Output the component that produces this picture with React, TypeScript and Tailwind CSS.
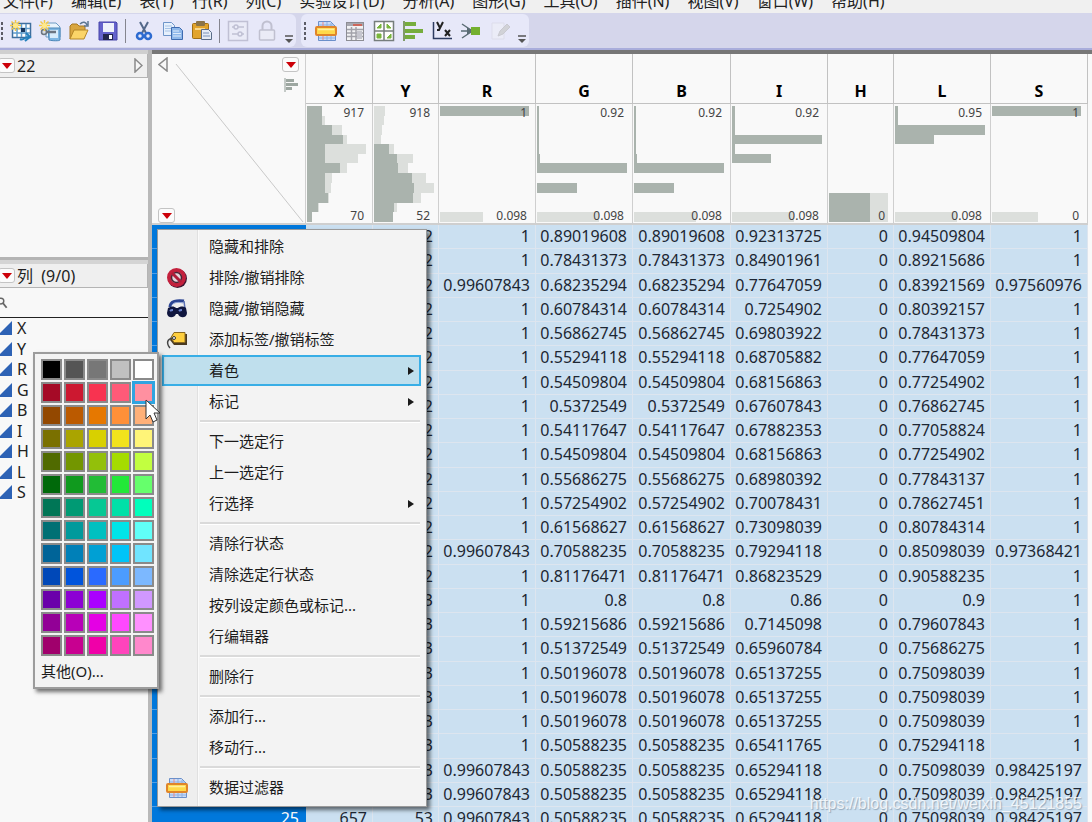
import React from 'react';
import { clsx } from 'clsx';

const MENUS = [
  '文件(F)', '编辑(E)', '表(T)', '行(R)', '列(C)', '实验设计(D)', '分析(A)',
  '图形(G)', '工具(O)', '插件(N)', '视图(V)', '窗口(W)', '帮助(H)',
];

// each bin is [selected, total] in pixels, listed top to bottom
type Bin = [number, number];

interface Column {
  name: string;
  width: number;
  max: string;
  min: string;
  bins: Bin[];
}

const E: Bin = [0, 0];
const GB_BINS: Bin[] = [[2, 2], [2, 2], [2, 2], [2, 2], [2, 2], [3, 3], [90, 90], E, [40, 40], E, E, [0, 62]];

const COLUMNS: Column[] = [
  {
    name: 'X', width: 67, max: '917', min: '70',
    bins: [[15, 15], [15, 18], [25, 35], [36, 40], [18, 59], [18, 51], [33, 40], [18, 25], [18, 24], [21, 22], [11, 12], [5, 5]],
  },
  {
    name: 'Y', width: 66, max: '918', min: '52',
    bins: [[0, 11], [0, 10], [0, 8], [0, 7], [15, 20], [23, 39], [24, 34], [38, 52], [40, 60], [39, 47], [20, 23], [19, 19]],
  },
  { name: 'R', width: 97, max: '1', min: '0.098', bins: [[89, 89], E, E, E, E, E, E, E, E, E, E, [0, 43]] },
  { name: 'G', width: 97, max: '0.92', min: '0.098', bins: GB_BINS },
  { name: 'B', width: 98, max: '0.92', min: '0.098', bins: GB_BINS },
  {
    name: 'I', width: 97, max: '0.92', min: '0.098',
    bins: [[3, 3], [3, 3], [3, 3], [90, 90], [3, 3], [39, 39], E, E, E, E, E, [0, 62]],
  },
  { name: 'H', width: 66, max: '', min: '0', bins: [E, E, E, E, E, E, E, E, E, [41, 59], [41, 59], [41, 59]] },
  {
    name: 'L', width: 97, max: '0.95', min: '0.098',
    bins: [[3, 3], [3, 3], [90, 90], [39, 39], E, E, E, E, E, E, E, [0, 62]],
  },
  { name: 'S', width: 97, max: '1', min: '0', bins: [[89, 89], E, E, E, E, E, E, E, E, E, E, [0, 46]] },
];

// row label first, then one value per column
const ROWS: string[][] = [
  ['', '', '52', '1', '0.89019608', '0.89019608', '0.92313725', '0', '0.94509804', '1'],
  ['', '', '52', '1', '0.78431373', '0.78431373', '0.84901961', '0', '0.89215686', '1'],
  ['', '', '52', '0.99607843', '0.68235294', '0.68235294', '0.77647059', '0', '0.83921569', '0.97560976'],
  ['', '', '52', '1', '0.60784314', '0.60784314', '0.7254902', '0', '0.80392157', '1'],
  ['', '', '52', '1', '0.56862745', '0.56862745', '0.69803922', '0', '0.78431373', '1'],
  ['', '', '52', '1', '0.55294118', '0.55294118', '0.68705882', '0', '0.77647059', '1'],
  ['', '', '52', '1', '0.54509804', '0.54509804', '0.68156863', '0', '0.77254902', '1'],
  ['', '', '52', '1', '0.5372549', '0.5372549', '0.67607843', '0', '0.76862745', '1'],
  ['', '', '52', '1', '0.54117647', '0.54117647', '0.67882353', '0', '0.77058824', '1'],
  ['', '', '52', '1', '0.54509804', '0.54509804', '0.68156863', '0', '0.77254902', '1'],
  ['', '', '52', '1', '0.55686275', '0.55686275', '0.68980392', '0', '0.77843137', '1'],
  ['', '', '52', '1', '0.57254902', '0.57254902', '0.70078431', '0', '0.78627451', '1'],
  ['', '', '52', '1', '0.61568627', '0.61568627', '0.73098039', '0', '0.80784314', '1'],
  ['', '', '52', '0.99607843', '0.70588235', '0.70588235', '0.79294118', '0', '0.85098039', '0.97368421'],
  ['', '', '52', '1', '0.81176471', '0.81176471', '0.86823529', '0', '0.90588235', '1'],
  ['', '', '53', '1', '0.8', '0.8', '0.86', '0', '0.9', '1'],
  ['', '', '53', '1', '0.59215686', '0.59215686', '0.7145098', '0', '0.79607843', '1'],
  ['', '', '53', '1', '0.51372549', '0.51372549', '0.65960784', '0', '0.75686275', '1'],
  ['', '', '53', '1', '0.50196078', '0.50196078', '0.65137255', '0', '0.75098039', '1'],
  ['', '', '53', '1', '0.50196078', '0.50196078', '0.65137255', '0', '0.75098039', '1'],
  ['', '', '53', '1', '0.50196078', '0.50196078', '0.65137255', '0', '0.75098039', '1'],
  ['', '', '53', '1', '0.50588235', '0.50588235', '0.65411765', '0', '0.75294118', '1'],
  ['', '', '53', '0.99607843', '0.50588235', '0.50588235', '0.65294118', '0', '0.75098039', '0.98425197'],
  ['', '', '53', '0.99607843', '0.50588235', '0.50588235', '0.65294118', '0', '0.75098039', '0.98425197'],
  ['25', '657', '53', '0.99607843', '0.50588235', '0.50588235', '0.65294118', '0', '0.75098039', '0.98425197'],
];

const SWATCHES = [
  '#000000', '#555555', '#777777', '#c0c0c0', '#ffffff',
  '#a50a26', '#cc1830', '#f83350', '#ff5a78', '#ff90a0',
  '#934800', '#bb5a00', '#e67800', '#ff9038', '#ffb078',
  '#7a7000', '#aaa400', '#d8d000', '#f2e31c', '#fff478',
  '#506a00', '#739600', '#93c00a', '#a5dc00', '#c2ff40',
  '#00690a', '#109a1e', '#22bc36', '#22e838', '#66ff6c',
  '#007656', '#009a74', '#06c894', '#00e0a8', '#00ffbc',
  '#007074', '#009a9c', '#00c0c0', '#00e4e8', '#60fff8',
  '#006498', '#0080b8', '#00a0d4', '#00c4f8', '#70e4ff',
  '#0048b8', '#0054dc', '#2a6aff', '#4c9cff', '#7cb8ff',
  '#6a00aa', '#8c00d4', '#aa00ff', '#c070ff', '#d098ff',
  '#920096', '#b800b8', '#e400e4', '#ff48ff', '#ff90ff',
  '#a0006c', '#c80090', '#f000a8', '#ff44bc', '#ff88cc',
];
const HOVERED_SWATCH = 9;

/* ---------- icons ---------- */

function Icon({ children, faded }: { children: React.ReactNode; faded?: boolean }) {
  return (
    <svg width="22" height="22" viewBox="0 0 22 22" className={clsx('block shrink-0', faded && 'opacity-50')} aria-hidden="true">
      {children}
    </svg>
  );
}

const Spark = () => (
  <g>
    <path d="M5.500 0v11M0 5.500h11M1.500 1.500l8 8M9.500 1.500l-8 8" stroke="#f3c94a" strokeWidth="1.500" />
    <circle cx="5.500" cy="5.500" r="2.500" fill="#ffe98a" />
  </g>
);

const NewTableIcon = () => (
  <Icon>
    <rect x="2.500" y="3.500" width="18" height="14" fill="#fff" stroke="#3f6f9e" strokeWidth="1.500" />
    <path d="M3 8.500h17M3 13h17M7 4v13M11.500 4v13M16 4v13" stroke="#5f9ccb" strokeWidth="1.500" />
    <rect x="11" y="8" width="4" height="4" fill="#17375e" />
    <path d="M10 19c4 2 5-3 9-2M16 13l4 4-5 4" stroke="#2581bd" strokeWidth="2" fill="none" />
    <Spark />
  </Icon>
);

const NewScriptIcon = () => (
  <Icon>
    <path d="M7 3h10l4 4v10H7z" fill="#e8f3fc" stroke="#6e9cc4" />
    <path d="M9 8h12v12c0 1-8 1-11 0z" fill="#7fb7e2" stroke="#4a86b8" />
    <path d="M11 10h8v8h-8z" fill="#d7ecfa" />
    <path d="M5 12h12" stroke="#6b7580" strokeWidth="2.500" />
    <circle cx="5" cy="12" r="2.500" fill="#d8dde2" stroke="#6b7580" strokeWidth="1.500" />
    <Spark />
  </Icon>
);

const OpenIcon = () => (
  <Icon>
    <path d="M2 19V6l2-2h5l2 2h6v4" fill="#d9a640" stroke="#a87820" />
    <path d="M2 19l4-9h14l-4 9z" fill="#fbd468" stroke="#b58626" />
    <path d="M12 4c3-3 6-2 7 1M20 1v5h-4" fill="none" stroke="#5d7691" strokeWidth="1.500" />
  </Icon>
);

const SaveIcon = () => (
  <Icon>
    <path d="M2 2h17l1 1v17H2z" fill="#6462cc" stroke="#4644a8" />
    <rect x="6" y="3" width="11" height="9" fill="#eef1fb" />
    <rect x="6" y="14" width="10" height="6" fill="#23264e" />
    <rect x="12" y="15" width="3" height="4" fill="#fff" />
  </Icon>
);

const CutIcon = () => (
  <Icon>
    <path d="M7 2l6 11M15 2L9 13" stroke="#54698a" strokeWidth="2" />
    <circle cx="7" cy="16" r="3" fill="none" stroke="#2d6bd0" strokeWidth="2.500" />
    <circle cx="15" cy="16" r="3" fill="none" stroke="#2d6bd0" strokeWidth="2.500" />
  </Icon>
);

const CopyIcon = () => (
  <Icon>
    <path d="M1.500 2.500h8l3 3v10h-11z" fill="#e6f0fc" stroke="#6f95c9" />
    <path d="M3 6h7M3 8.500h7M3 11h7" stroke="#a6c2e6" />
    <path d="M9.500 7.500h8l3 3v9h-11z" fill="#8fb8ea" stroke="#3e6bb0" />
    <path d="M11 11h6M11 13.500h8M11 16h8" stroke="#dceafb" />
  </Icon>
);

const PasteIcon = () => (
  <Icon>
    <rect x="1.500" y="3.500" width="16" height="15" rx="1" fill="#e2a42c" stroke="#a06f15" />
    <rect x="5" y="1" width="9" height="5" rx="1" fill="#8b7448" />
    <path d="M4 8h10v2H4z" fill="#fbd98c" />
    <path d="M10.500 9.500h7l3 3v7h-10z" fill="#e4ebf5" stroke="#5a6c88" />
    <path d="M12 13h6M12 16h7" stroke="#7c93b8" />
  </Icon>
);

const SlidersIcon = () => (
  <Icon faded>
    <rect x="1.500" y="1.500" width="19" height="19" fill="#eeeef6" stroke="#9a9ab0" strokeWidth="1.500" />
    <path d="M5 7h12M5 14h12" stroke="#9a9ab0" strokeWidth="1.500" />
    <circle cx="9" cy="7" r="2" fill="#eeeef6" stroke="#9a9ab0" strokeWidth="1.500" />
    <circle cx="13" cy="14" r="2" fill="#eeeef6" stroke="#9a9ab0" strokeWidth="1.500" />
  </Icon>
);

const LockIcon = () => (
  <Icon faded>
    <path d="M6.500 10V6a4.500 4.500 0 0 1 9 0v4" fill="none" stroke="#9a9aa8" strokeWidth="2" />
    <rect x="3.500" y="10" width="15" height="10" rx="1" fill="#eeeef4" stroke="#9a9aa8" strokeWidth="1.500" />
  </Icon>
);

const FilterIcon = () => (
  <Icon>
    <path d="M3.500 1.500h12l5 5v14h-17z" fill="#c9dcf8" stroke="#6b8fc9" />
    <path d="M12 2v18M16 3v17M4 5h15M4 18h16" stroke="#8fb0e2" />
    <path d="M8 2v18" stroke="#e78b8b" />
    <rect x="1" y="7" width="20" height="8" rx="1" fill="#ffd94a" stroke="#e0852a" strokeWidth="2" />
    <path d="M3 9.500h16" stroke="#fff0a0" strokeWidth="1.500" />
  </Icon>
);

const SummaryIcon = () => (
  <Icon>
    <rect x="2.500" y="2.500" width="17" height="18" fill="#f2f2f4" stroke="#8d8d94" />
    <rect x="3" y="3" width="16" height="3" fill="#a8a8b0" />
    <path d="M9 5h9" stroke="#d8503f" strokeWidth="1.500" />
    <path d="M3 9.500h16M3 13h16M3 16.500h16M7.500 7v13M12 7v13" stroke="#a2a2aa" strokeWidth="1.500" />
    <rect x="13" y="11" width="5" height="8" fill="#c5c5ce" />
  </Icon>
);

const TabulateIcon = () => (
  <Icon>
    <rect x="1.500" y="1.500" width="19" height="19" fill="#fdfdfd" stroke="#767d7c" strokeWidth="1.500" />
    <path d="M11 2v18M2 11h18" stroke="#767d7c" strokeWidth="1.500" />
    <path d="M4 8l4-4v4zM14 4v4h4zM4 14h4v4H4zM14 18l4-4v4z" fill="#79b63c" stroke="#79b63c" />
  </Icon>
);

const DistributionIcon = () => (
  <Icon>
    <path d="M2 1v20" stroke="#5f8238" strokeWidth="1.500" />
    <path d="M3 2h11v4H3zM3 9h18v4H3zM3 15h10v4H3z" fill="#76ad3d" />
  </Icon>
);

const FitIcon = () => (
  <Icon>
    <path d="M2.500 2v16.500H21" fill="none" stroke="#2d3b60" strokeWidth="1.500" />
    <path d="M6 2l3 6M12 2L8 10H6" fill="none" stroke="#222" strokeWidth="2" />
    <path d="M14 10l5 6M19 10l-5 6" stroke="#222" strokeWidth="2" />
  </Icon>
);

const ModelIcon = () => (
  <Icon>
    <path d="M2 4l9 6M1 11h9M2 18l9-6" stroke="#5a6b74" strokeWidth="1.500" />
    <path d="M7 7l5 4-5 4" fill="#5a6b74" />
    <rect x="11" y="7" width="9" height="8" fill="#74b02f" />
  </Icon>
);

const EditIcon = () => (
  <Icon faded>
    <path d="M3 3h12v16H3z" fill="#f0f0f6" stroke="#d5d5de" />
    <path d="M9 16l2-5 7-7 3 3-7 7z" fill="#bdbdb6" stroke="#acaca8" />
  </Icon>
);

const ForbidIcon = () => (
  <Icon>
    <circle cx="11.500" cy="11.500" r="9.500" fill="#3d1530" />
    <circle cx="10.500" cy="10.500" r="7.500" fill="#e3d5dc" stroke="#c3203c" strokeWidth="4" />
    <circle cx="10.500" cy="10.500" r="5" fill="none" stroke="#4a2334" strokeWidth="1.500" />
    <path d="M6 6l9 9" stroke="#b01c38" strokeWidth="3" />
  </Icon>
);

const MaskIcon = () => (
  <Icon>
    <path d="M4 9c0-6 7-7 14-6" fill="none" stroke="#2b4492" strokeWidth="3" />
    <path d="M6 7c2-3 7-3 11-2" fill="none" stroke="#8fa4d8" />
    <path d="M18 3l1 8" stroke="#5a70b4" strokeWidth="1.500" />
    <path d="M2 10c3-2 6-2 8 0h2c2-2 6-2 8 0l1 5c0 5-7 6-9 1h-2c-2 5-9 4-9-1z" fill="#10163f" />
    <path d="M4 13c1-1 2-1 3-1M13 13c1-1 2-1 3-1" stroke="#6f86cf" strokeWidth="2" />
  </Icon>
);

const TagIcon = () => (
  <Icon>
    <path d="M7 5h14v11H8l-4-5z" fill="#4a3a20" />
    <path d="M8 3.500h11v10H8l-3-5z" fill="#ffcf3e" stroke="#8b6a20" />
    <circle cx="8" cy="9" r="1.500" fill="#fff" stroke="#333" />
    <path d="M7 9c-6 1-7 5-3 10" fill="none" stroke="#444" strokeWidth="1.500" />
  </Icon>
);

function RedTriangle() {
  return (
    <button className="flex h-[15px] w-[17px] shrink-0 items-center justify-center rounded-[3px] border border-[#c4c4c4] bg-[#fbfbfb]" aria-label="menu">
      <svg width="10" height="6" viewBox="0 0 10 6"><path d="M0 0h10L5 6z" fill="#cc0008" /></svg>
    </button>
  );
}

/* ---------- toolbar ---------- */

function Grip() {
  return (
    <svg width="10" height="20" viewBox="0 0 10 20" className="shrink-0">
      <path d="M4 1v3M4 6v3M4 11v3M4 16v3" stroke="#5c5c66" strokeWidth="2" />
    </svg>
  );
}

function Tools({ children }: { children: React.ReactNode }) {
  return (
    <>
      {React.Children.map(children, (icon) => (
        <button className="flex w-[29px] shrink-0 items-center justify-center">{icon}</button>
      ))}
    </>
  );
}

const Divider = () => <div className="mx-[3px] h-6 w-px shrink-0 bg-[#85858f]" />;

function Overflow() {
  return (
    <button className="flex h-full w-[15px] shrink-0 items-end justify-center pb-1" aria-label="more">
      <svg width="8" height="8" viewBox="0 0 8 8"><path d="M0 1h8" stroke="#555" strokeWidth="1.500" /><path d="M0 4h8L4 8z" fill="#555" /></svg>
    </button>
  );
}

function Toolbar() {
  return (
    <div className="flex h-[37px] shrink-0 gap-[5px] border-b-2 border-[#a9addb] bg-[#d5d6eb] py-px">
      <div className="flex items-center rounded-r-md bg-[#e7e8f9]">
        <div className="flex w-[6px] justify-center overflow-hidden"><Grip /></div>
        <Tools><NewTableIcon /><NewScriptIcon /><OpenIcon /><SaveIcon /></Tools>
        <Divider />
        <Tools><CutIcon /><CopyIcon /><PasteIcon /></Tools>
        <Divider />
        <Tools><SlidersIcon /><LockIcon /></Tools>
        <Overflow />
      </div>
      <div className="flex items-center rounded-md bg-[#e7e8f9]">
        <Grip />
        <Tools>
          <FilterIcon /><SummaryIcon /><TabulateIcon /><DistributionIcon /><FitIcon /><ModelIcon /><EditIcon />
        </Tools>
        <Overflow />
      </div>
    </div>
  );
}

/* ---------- side panel ---------- */

function PanelHeader({ children }: { children: React.ReactNode }) {
  return (
    <div className="flex h-6 items-center border-b border-r border-[#b4b4b4] bg-[#efefef] pr-1">
      <div className="mr-0.5 flex w-[15px] justify-end overflow-hidden"><RedTriangle /></div>
      {children}
    </div>
  );
}

function SidePanel() {
  return (
    <aside className="flex w-[152px] shrink-0 flex-col border-r-4 border-[#b9b9b9] bg-[#f8f8f8]">
      <section className="h-[210px] border-b-[3px] border-[#b4b4b4]">
        <div className="h-1 bg-[#cfcfcf]" />
        <PanelHeader>
          <h2 className="grow">22</h2>
          <svg width="9" height="15" viewBox="0 0 9 15"><path d="M1 1v13l7-6.500z" fill="#f6f6f6" stroke="#8a8a8a" strokeWidth="1.500" /></svg>
        </PanelHeader>
      </section>
      <section>
        <div className="h-1 bg-[#d4d4d4]" />
        <PanelHeader>
          <h2 className="whitespace-pre">列  (9/0)</h2>
        </PanelHeader>
        <label className="flex h-[30px] items-center border-b border-[#222]">
          <svg width="8" height="12" viewBox="0 0 8 12"><circle cx="1" cy="4" r="3" fill="none" stroke="#666" strokeWidth="1.500" /><path d="M3 6l4 5" stroke="#666" strokeWidth="2" /></svg>
          <input className="w-full min-w-0 bg-transparent outline-none" aria-label="search" />
        </label>
        <ul>
          {COLUMNS.map((c) => (
            <li key={c.name} className="flex h-5 items-center gap-[5px] even:h-[21px]">
              <svg width="12" height="14" viewBox="0 0 12 14"><path d="M12 0v14H-2z" fill="#2d62b5" /></svg>
              <span className="leading-5">{c.name}</span>
            </li>
          ))}
        </ul>
      </section>
    </aside>
  );
}

/* ---------- data grid ---------- */

const BIN_EDGES = [0, 10, 19, 29, 38, 48, 57, 67, 77, 87, 97, 106, 116];

function Histogram({ column }: { column: Column }) {
  return (
    <div className="relative flex h-[119px] flex-col justify-between pr-2 pt-0.5 text-right text-xs font-normal leading-[14px] text-[#444]">
      <svg className="absolute left-0 top-0.5 h-[117px] w-full" aria-hidden="true">
        {column.bins.map(([selected, total], i) => {
          const h = BIN_EDGES[i + 1] - BIN_EDGES[i];
          return (
            <g key={i}>
              <rect x="1" y={BIN_EDGES[i]} width={total} height={h} fill="#dcdfdc" />
              <rect x="1" y={BIN_EDGES[i]} width={selected} height={h} fill="#aab3ad" />
            </g>
          );
        })}
      </svg>
      <span className="relative">{column.max}</span>
      <span className="relative">{column.min}</span>
    </div>
  );
}

function Corner() {
  return (
    <div className="relative flex h-[169px] flex-col justify-between px-1.5 pt-[3px]">
      <svg className="absolute inset-0 h-full w-full" aria-hidden="true">
        <path d="M24 10L151 168" stroke="#c9c9c9" />
      </svg>
      <div className="relative flex items-start justify-between">
        <svg width="10" height="15" viewBox="0 0 10 15"><path d="M9 1v13L1 7.500z" fill="#f6f6f6" stroke="#8a8a8a" strokeWidth="1.500" /></svg>
        <div className="flex flex-col items-center gap-1.5">
          <RedTriangle />
          <svg width="14" height="14" viewBox="0 0 14 14"><path d="M1 0v14" stroke="#8f9a94" /><path d="M2 2.500h8M2 6.500h12M2 10.500h6" stroke="#9da7a1" strokeWidth="3" /></svg>
        </div>
      </div>
      <div className="relative"><RedTriangle /></div>
    </div>
  );
}

function DataGrid() {
  return (
    <div className="min-w-0 grow overflow-hidden border-t-4 border-[#777] bg-[#f9f9f9]">
      <table className="w-[936px] table-fixed border-separate border-spacing-0">
        <colgroup>
          <col className="w-[154px]" />
          {COLUMNS.map((c) => <col key={c.name} style={{ width: c.width }} />)}
        </colgroup>
        <thead>
          <tr>
            <th rowSpan={2} className="border-b-2 border-r border-[#cfcfcf] p-0 align-top"><Corner /></th>
            {COLUMNS.map((c) => (
              <th key={c.name} className="h-[50px] border-b border-r border-[#c2c2c2] p-0 align-bottom font-bold leading-[23px] text-black">
                {c.name}
              </th>
            ))}
          </tr>
          <tr>
            {COLUMNS.map((c) => (
              <td key={c.name} className="border-b-2 border-r border-[#cfcfcf] p-0"><Histogram column={c} /></td>
            ))}
          </tr>
        </thead>
        <tbody>
          {ROWS.map(([label, ...values], r) => (
            <tr key={r} className="h-6 nth-[4n+2]:h-[25px]">
              <th className="border-b border-[#4f9fe6] bg-[#0078dc] p-0 pb-0.5 pr-[7px] text-right font-normal leading-5 text-white">{label}</th>
              {values.map((value, i) => (
                <td key={i} className="border-b border-r border-[#dde5ef] bg-[#cbe0f1] p-0 pb-0.5 pr-[5px] text-right leading-5 text-[#1d2733]">
                  {value}
                </td>
              ))}
            </tr>
          ))}
        </tbody>
      </table>
    </div>
  );
}

/* ---------- context menu ---------- */

interface MenuItem {
  label: string;
  icon?: React.ReactNode;
  submenu?: boolean;
  active?: boolean;
}

const MENU_GROUPS: MenuItem[][] = [
  [
    { label: '隐藏和排除' },
    { label: '排除/撤销排除', icon: <ForbidIcon /> },
    { label: '隐藏/撤销隐藏', icon: <MaskIcon /> },
    { label: '添加标签/撤销标签', icon: <TagIcon /> },
    { label: '着色', submenu: true, active: true },
    { label: '标记', submenu: true },
  ],
  [{ label: '下一选定行' }, { label: '上一选定行' }, { label: '行选择', submenu: true }],
  [{ label: '清除行状态' }, { label: '清除选定行状态' }, { label: '按列设定颜色或标记...' }, { label: '行编辑器' }],
  [{ label: '删除行' }],
  [{ label: '添加行...' }, { label: '移动行...' }],
  [{ label: '数据过滤器', icon: <FilterIcon /> }],
];

function ContextMenu() {
  return (
    <div className="absolute left-[157px] top-[179px] w-[270px] border border-[#9a9a9a] bg-[#f3f3f3] bg-[linear-gradient(to_right,#eeeeee_39px,#e0e0e0_39px,#e0e0e0_40px,#fafafa_40px,#fafafa_41px,#f3f3f3_41px)] pb-[3px] pt-px text-[15px] text-[#1c1c1c] shadow-[3px_3px_4px_rgba(0,0,0,0.55)]">
      {MENU_GROUPS.map((group, g) => (
        <div key={g}>
          {g > 0 && <div className="my-[3px] ml-[42px] mr-1.5 h-[3px] border-t-2 border-[#dadada] bg-white" />}
          {group.map((item) => (
            <button
              key={item.label}
              className={clsx(
                'ml-1 flex h-[31px] w-[259px] items-center border-2 text-left',
                item.active ? 'border-[#38aee6] bg-[#bfdfed]' : 'border-transparent'
              )}
            >
              <span className="flex w-[26px] shrink-0 justify-center">{item.icon}</span>
              <span className="ml-[19px] grow">{item.label}</span>
              {item.submenu && <svg width="6" height="8" viewBox="0 0 6 8" className="mr-[5px]"><path d="M0 0l6 4-6 4z" fill="#1a1a1a" /></svg>}
            </button>
          ))}
        </div>
      ))}
    </div>
  );
}

function ColorMenu() {
  return (
    <div className="absolute left-[33px] top-[302px] w-[126px] border-2 border-[#9c9c9c] bg-[#f3f3f3] px-1.5 pt-[5px] text-[15px] text-[#1c1c1c] shadow-[3px_3px_4px_rgba(0,0,0,0.55)]">
      <div className="grid grid-cols-[repeat(5,21px)] gap-0.5">
        {SWATCHES.map((color, i) => (
          <button
            key={color}
            aria-label={color}
            className={clsx(
              'h-[21px] border-2',
              i === HOVERED_SWATCH ? 'border-[#2fa4e0] outline outline-[#2fa4e0]' : 'border-[#8a8a8a]'
            )}
            style={{ backgroundColor: color }}
          />
        ))}
      </div>
      <button className="block h-[31px] w-full text-left">其他(O)...</button>
    </div>
  );
}

function Cursor() {
  return (
    <svg className="absolute left-[145px] top-[349px]" width="17" height="25" viewBox="0 0 17 25" aria-hidden="true">
      <path d="M1 1v19l4-4 3 7 4-2-3-7h6z" fill="#fff" stroke="#333" />
    </svg>
  );
}

export default function App() {
  return (
    <div className="relative flex h-screen flex-col overflow-hidden bg-[#f8f8f8] font-['Noto_Sans','Noto_Sans_CJK_SC',sans-serif] text-base text-[#222]">
      <nav className="flex h-[13px] shrink-0 items-end gap-[18px] bg-[#f0f0f0] pb-0.5 pl-[3px]">
        {MENUS.map((m) => <button key={m} className="shrink-0 leading-5">{m}</button>)}
      </nav>
      <Toolbar />
      <main className="relative flex min-h-0 grow">
        <SidePanel />
        <DataGrid />
        <ContextMenu />
        <ColorMenu />
        <Cursor />
      </main>
      <span className="absolute bottom-1.5 right-2.5 font-['Liberation_Sans',sans-serif] text-base text-white/80 [text-shadow:1px_1px_1px_rgba(90,110,130,0.5)]">
        https://blog.csdn.net/weixin_45121855
      </span>
    </div>
  );
}
